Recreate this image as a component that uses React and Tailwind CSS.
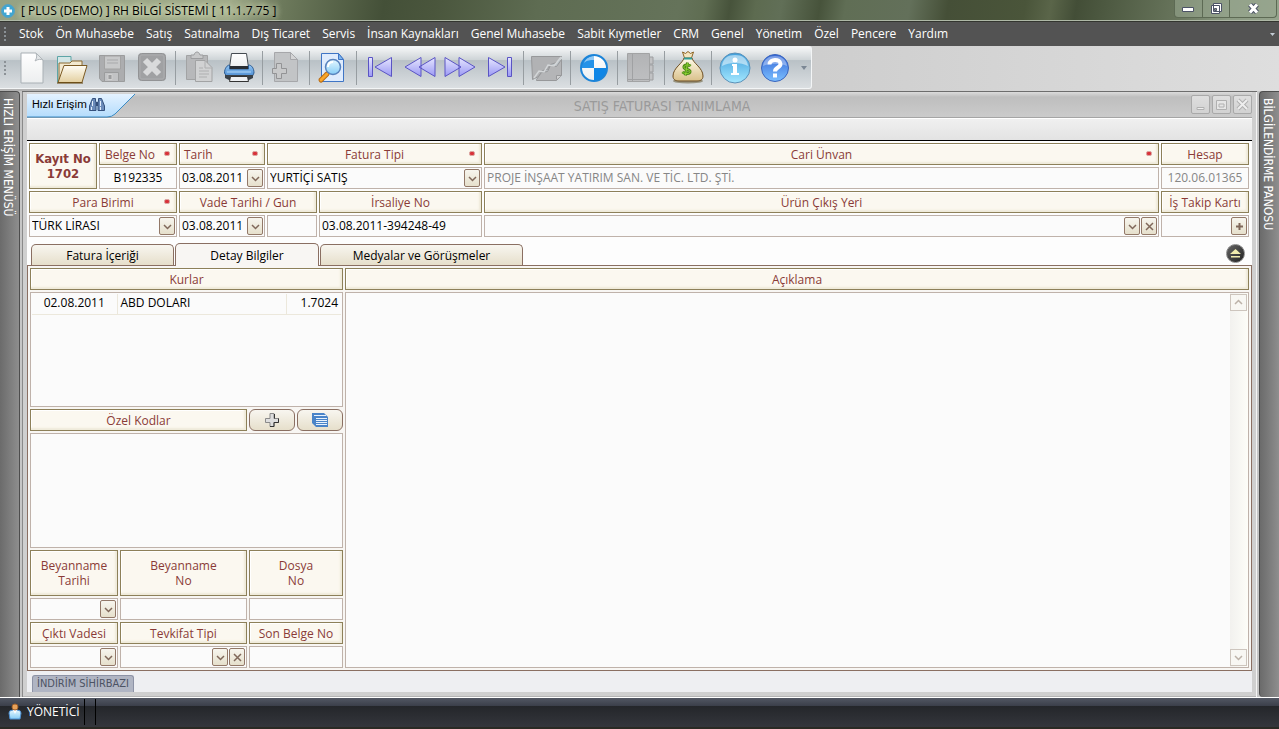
import { useState } from "react";

const MENU = [
  "Stok",
  "Ön Muhasebe",
  "Satış",
  "Satınalma",
  "Dış Ticaret",
  "Servis",
  "İnsan Kaynakları",
  "Genel Muhasebe",
  "Sabit Kıymetler",
  "CRM",
  "Genel",
  "Yönetim",
  "Özel",
  "Pencere",
  "Yardım",
];

const headClass =
  "relative flex items-center justify-center border border-[#8d8059] bg-[#fbf8f0] px-1 text-center leading-[15px] text-[#8a3b37] shadow-[inset_-2px_-2px_2px_#efeada,inset_1px_1px_0_#ffffff]";
const fieldClass =
  "flex h-[22px] min-w-0 items-center border border-[#bfb2aa] bg-[#fbfbfb]";
const inputClass =
  "h-full w-full min-w-0 flex-1 appearance-none bg-transparent px-[2px] pb-[1px] outline-none";
const tabClass =
  "rounded-t-[5px] border border-b-0 border-[#8a6f62] pt-[2px] text-black";

const svgProps = {
  width: 32,
  height: 34,
  viewBox: "0 0 32 34",
  fill: "none",
  "aria-hidden": true,
};

function NewIcon() {
  return (
    <svg {...svgProps}>
      <path d="M5 2h15l7 7v23H5z" fill="url(#paper)" stroke="#a9b0b5" />
      <path d="M20 2c1 3 1 5-1 8 3-2 6-2 8-1z" fill="#e2e5e7" stroke="#b0b6ba" />
    </svg>
  );
}

function OpenIcon() {
  return (
    <svg {...svgProps}>
      <path d="M1.500 31V5.500H15v5h10V31z" fill="#d3e6e6" stroke="#5da5a7" />
      <path d="M3 31V12h11l2-2h10v5" fill="#f2e9cf" stroke="#8c6c34" />
      <path d="M2 31.500 8 14.500h23L26 31.500z" fill="url(#folder)" stroke="#7c5a22" />
      <path d="M1 32h26" stroke="#5f430f" />
    </svg>
  );
}

function SaveIcon() {
  return (
    <svg {...svgProps}>
      <path d="M3.500 4.500h25v26H6l-2.500-3z" fill="#acadaf" stroke="#9b9c9d" />
      <path d="M8.500 5h16v13h-16z" fill="#c8c9ca" stroke="#a3a3a3" />
      <path d="M11 9h11M11 12h11" stroke="#a8a9ab" />
      <path d="M8.500 21.500h14v9h-14z" fill="#c2c3c5" stroke="#9b9c9d" />
      <path d="M12 23.500h4v5h-4z" fill="#9c9d9f" stroke="#d0d0d0" />
    </svg>
  );
}

function DeleteIcon() {
  return (
    <svg {...svgProps}>
      <rect x="2.500" y="2.500" width="27" height="27" rx="3" fill="#a0a1a3" stroke="#929395" />
      <rect x="4" y="4" width="24" height="24" rx="2" stroke="#adaeb0" />
      <path d="m9 9 14 14M23 9 9 23" stroke="#d9dadb" strokeWidth="6" />
    </svg>
  );
}

function PasteIcon() {
  return (
    <svg {...svgProps}>
      <path d="M3.500 4.500h21v24h-21z" fill="#b7b8ba" stroke="#a2a3a4" />
      <path d="M8 7.500V4h3c1-4 5-4 6 0h3v3.500z" fill="#c8c9ca" stroke="#9c9d9f" />
      <path d="M12.500 9.500H22l7 7v14H12.500z" fill="#d1d2d3" stroke="#a2a3a4" />
      <path d="M22 10v7h7M16 17h4M16 20h10M16 23h10M16 26h8" stroke="#aeafb0" />
    </svg>
  );
}

function PrintIcon() {
  return (
    <svg {...svgProps}>
      <path d="M8.500 2.500h15l2 14h-19z" fill="url(#paper)" stroke="#444a50" />
      <path d="M1.500 22c0-5 3-8 5-8v4h19v-4c3 0 5.500 3 5.500 8l-2 4H4z" fill="url(#blue)" stroke="#2d5c92" />
      <path d="M7 15h18v3H7z" fill="#282d33" />
      <path d="M2 24h28v3l-4 2H6l-4-2z" fill="#3a4148" />
      <path d="M7.500 25.500h17l1 5h-19z" fill="#eef0f2" stroke="#333" />
      <path d="M4 21h24" stroke="#b4d8f8" />
    </svg>
  );
}

function AddPageIcon() {
  return (
    <svg {...svgProps}>
      <path d="M4.500 1.500h16l7 7v22h-23z" fill="#c2c4c6" stroke="#a6a7aa" />
      <path d="M20.500 1.500v7h7z" fill="#d4d5d6" stroke="#a6a7aa" />
      <path d="M6.500 12.500h5v5h5v5h-5v5h-5v-5h-4v-5h4z" fill="#c8c9ca" stroke="#929395" />
    </svg>
  );
}

function SearchIcon() {
  return (
    <svg {...svgProps}>
      <path d="M4.500 2.500h17l5 6v22h-22z" fill="#dfecfd" stroke="#3f75c5" />
      <path d="M21.500 2.500v6h5z" fill="#7fb7ee" stroke="#3f75c5" />
      <path d="m4 29 6-6" stroke="#b96a10" strokeWidth="5" strokeLinecap="round" />
      <path d="m4 29 6-6" stroke="#f8a62c" strokeWidth="3" strokeLinecap="round" />
      <circle cx="16" cy="16" r="7.500" fill="url(#lens)" stroke="#5983bd" strokeWidth="1.500" />
      <path d="M11 16c0-3 2-5 5-5" stroke="#fff" strokeWidth="2" />
    </svg>
  );
}

const NAV_PATHS = {
  first: "M4.500 6.500h4v19h-4zM27.500 6.500v19L11 16z",
  prev: "M17 6.500v19L1 16zM31 6.500v19L15 16z",
  next: "M1 6.500v19L17 16zM15 6.500v19L31 16z",
  last: "M4.500 6.500v19L21 16zM23.500 6.500h4v19h-4z",
};

function NavIcon({ kind }) {
  return (
    <svg {...svgProps}>
      <path d={NAV_PATHS[kind]} fill="url(#nav)" stroke="#5a54c4" strokeLinejoin="round" />
    </svg>
  );
}

function ChartIcon() {
  return (
    <svg {...svgProps}>
      <path d="M.500 5.500h30l-5 6-6 2-3 5-5 1-4 6-6 3z" fill="#b1b2b4" stroke="#97989a" />
      <path d="m5.500 28.500 5-7 6-1 3-6 6 1 5-7v16l-5 5h-20z" fill="#b4b5b7" stroke="#97989a" />
      <path d="m3 27 5-7 5 1 4-7 6 1 7-9" stroke="#d3d6d8" strokeWidth="1.500" />
      <path d="M25.500 28.500v-4h5" fill="#d0d1d2" stroke="#97989a" />
    </svg>
  );
}

function RoundelIcon() {
  return (
    <svg {...svgProps}>
      <circle cx="16" cy="17" r="13.500" fill="url(#paper)" />
      <path d="M16 17V4A13 13 0 0 0 3 17z" fill="#2492e8" />
      <path d="M16 17v13a13 13 0 0 0 13-13z" fill="#0f86e6" />
      <path d="M6 12c2-5 6-7 10-7s8 2 10 7c-3-3-6-3-10-3s-7 0-10 3z" fill="#ffffff" opacity=".5" />
      <circle cx="16" cy="17" r="13" stroke="#1c84d8" strokeWidth="2" />
    </svg>
  );
}

function BookIcon() {
  return (
    <svg {...svgProps}>
      <path d="M23 6h5v7h-5zM23 14h5v7h-5zM23 22h5v7h-5z" fill="#c1c2c4" stroke="#9d9ea0" />
      <path d="M2.500 2.500h22v28h-22z" fill="url(#book)" stroke="#a2a3a4" />
      <path d="M7.500 3v27M3 28.500h21" stroke="#a0a1a3" />
    </svg>
  );
}

function MoneyIcon() {
  return (
    <svg {...svgProps}>
      <ellipse cx="16" cy="30" rx="15" ry="2.500" fill="#6f6543" opacity=".6" />
      <path d="M12 7h8c1 5 11 10 11 18 0 4-3 5-6 5H7c-3 0-6-1-6-5C1 17 11 12 12 7z" fill="url(#bag)" stroke="#6d4d20" />
      <path d="m10.500 1 3 1.500L16 .500l2.500 2 3-1.500-2 6h-7z" fill="#f5e5bf" stroke="#8c6426" />
      <path d="M12 7.500h8" stroke="#2f9c98" strokeWidth="2" />
      <path d="M18.500 15c-2-2-7-1-6.500 1.500s6 1.500 6 4-5 3-7.500.500M15.500 11.500l-2 13" stroke="#4c8a16" strokeWidth="3" />
      <path d="M18.500 15c-2-2-7-1-6.500 1.500s6 1.500 6 4-5 3-7.500.500M15.500 12l-2 12" stroke="#8ed332" />
    </svg>
  );
}

function InfoIcon() {
  return (
    <svg {...svgProps}>
      <circle cx="16" cy="17" r="15" fill="url(#aqua)" stroke="#5a90b8" />
      <path d="M3 15C4 7 9 4 16 4s12 3 13 11c-7-4-19-4-26 0z" fill="#fff" opacity=".5" />
      <circle cx="16" cy="9" r="2.500" fill="#fff" />
      <path d="M13 13h5v9h2v2h-8v-2h2v-7h-1z" fill="#fff" />
    </svg>
  );
}

function HelpIcon() {
  return (
    <svg {...svgProps}>
      <circle cx="16" cy="17" r="13.500" fill="url(#help)" stroke="#3a64bc" />
      <path d="M4 15C5 8 10 5 16 5s11 3 12 10c-6-3-18-3-24 0z" fill="#fff" opacity=".35" />
      <path d="M10.500 13.500c0-6 11-6 11-.500 0 4-5.500 3-5.500 7.500" stroke="#fff" strokeWidth="4" />
      <path d="M14 22.500h4v4h-4z" fill="#fff" />
    </svg>
  );
}

// null marks a separator
const TOOLS = [
  ["Yeni", <NewIcon />],
  ["Aç", <OpenIcon />],
  ["Kaydet", <SaveIcon />],
  ["Sil", <DeleteIcon />],
  null,
  ["Yapıştır", <PasteIcon />],
  ["Yazdır", <PrintIcon />],
  null,
  ["Ekle", <AddPageIcon />],
  null,
  ["Ara", <SearchIcon />],
  null,
  ["İlk", <NavIcon kind="first" />],
  ["Önceki", <NavIcon kind="prev" />],
  ["Sonraki", <NavIcon kind="next" />],
  ["Son", <NavIcon kind="last" />],
  null,
  ["Grafik", <ChartIcon />],
  null,
  ["Durum", <RoundelIcon />],
  null,
  ["Defter", <BookIcon />],
  null,
  ["Kasa", <MoneyIcon />],
  null,
  ["Bilgi", <InfoIcon />],
  ["Yardım", <HelpIcon />],
];

function Gradients() {
  const list = [
    ["paper", "#ffffff", "#eceeef"],
    ["folder", "#fffdf5", "#e3cf9f"],
    ["blue", "#8fc3f2", "#4b8bd0"],
    ["lens", "#e6f8ff", "#86cdf6"],
    ["nav", "#e6e6ff", "#9a98f4"],
    ["book", "#b2b3b5", "#bebfc1"],
    ["bag", "#fffbe8", "#d9c08a"],
    ["aqua", "#3f9fdc", "#a5e8ff"],
    ["help", "#3567d6", "#7cc0ff"],
  ];
  return (
    <svg className="absolute h-0 w-0" aria-hidden="true">
      <defs>
        {list.map(([id, from, to]) => (
          <linearGradient key={id} id={id} x1="0" y1="0" x2="0" y2="1">
            <stop offset="0" stopColor={from} />
            <stop offset="1" stopColor={to} />
          </linearGradient>
        ))}
      </defs>
    </svg>
  );
}

function Grip() {
  return (
    <span className="flex w-[3px] flex-col gap-[2px]">
      {[0, 1, 2, 3].map((n) => (
        <span key={n} className="h-[2px] w-[2px] bg-[#8b9196]" />
      ))}
    </span>
  );
}

function Head({ children, required, className = "", htmlFor }) {
  return (
    <label htmlFor={htmlFor} className={`${headClass} ${className}`}>
      <span className={required ? "flex-1 pr-4" : ""}>{children}</span>
      {required && (
        <span className="absolute top-[7px] right-[6px] h-[5px] w-[6px] rounded-[2px] border border-[#dba6a2] bg-[#d8323a]" />
      )}
    </label>
  );
}

const GLYPHS = {
  down: "M2 4l3.500 3.500L9 4",
  up: "M2 7l3.500-3.500L9 7",
  close: "M2 2l7 7M9 2l-7 7",
};

function Glyph({ name }) {
  return (
    <svg width="11" height="11" viewBox="0 0 11 11" fill="none" aria-hidden="true">
      {name === "plus" ? (
        <path d="M5.500 2v7M2 5.500h7" stroke="currentColor" strokeWidth="2" />
      ) : (
        <path d={GLYPHS[name]} stroke="currentColor" strokeWidth="1.500" />
      )}
    </svg>
  );
}

const smallClass =
  "mr-[1px] flex h-[18px] w-[16px] shrink-0 items-center justify-center rounded-[2px] border border-[#927868] bg-linear-to-b from-[#f7f5ee] to-[#e6e0cc] text-[#80685a]";

function SmallButton({ icon, label }) {
  return (
    <button type="button" aria-label={label} className={smallClass}>
      <Glyph name={icon} />
    </button>
  );
}

function Field({ id, label, value = "", className = "", inputClassName = "", children }) {
  return (
    <div className={`${fieldClass} ${className}`}>
      <input
        id={id}
        aria-label={label}
        defaultValue={value}
        className={`${inputClass} ${inputClassName}`}
      />
      {children}
    </div>
  );
}

function SelectField({ id, value = "", className = "", children }) {
  return (
    <div className={`${fieldClass} ${className}`}>
      <div className="relative flex h-full min-w-0 flex-1 items-center">
        <select id={id} defaultValue={value} className={inputClass}>
          <option>{value}</option>
        </select>
        <span className={`${smallClass} pointer-events-none absolute right-0`}>
          <Glyph name="down" />
        </span>
      </div>
      {children}
    </div>
  );
}

function InvoiceHeader() {
  return (
    <div className="grid grid-cols-[68px_78px_86px_50px_163px_1fr_88px] auto-rows-[22px] gap-[2px] pt-[2px] pr-[3px] pl-[2px]">
      <div
        className={`${headClass} row-span-2 font-['DejaVu_Sans_Condensed','DejaVu_Sans',sans-serif] text-[13px] leading-[14px] font-bold`}
      >
        <span>
          Kayıt No
          <br />
          1702
        </span>
      </div>
      <Head htmlFor="belge" required>Belge No</Head>
      <Head htmlFor="tarih" required>
        <span className="block text-left">Tarih</span>
      </Head>
      <Head htmlFor="tip" required className="col-span-2 pl-5">Fatura Tipi</Head>
      <Head htmlFor="cari" required className="pl-5">Cari Ünvan</Head>
      <Head htmlFor="hesap">Hesap</Head>

      <Field id="belge" value="B192335" inputClassName="text-center" />
      <Field id="tarih" value="03.08.2011">
        <SmallButton icon="down" label="Tarih seç" />
      </Field>
      <SelectField id="tip" value="YURTİÇİ SATIŞ" className="col-span-2" />
      <Field
        id="cari"
        value="PROJE İNŞAAT YATIRIM SAN. VE TİC. LTD. ŞTİ."
        inputClassName="text-[#868686]"
      />
      <Field id="hesap" value="120.06.01365" inputClassName="text-center text-[#868686]" />

      <Head htmlFor="para" required className="col-span-2 pl-5">Para Birimi</Head>
      <Head htmlFor="vade" className="col-span-2">Vade Tarihi / Gun</Head>
      <Head htmlFor="irsaliye">İrsaliye No</Head>
      <Head htmlFor="cikis">Ürün Çıkış Yeri</Head>
      <Head htmlFor="takip">İş Takip Kartı</Head>

      <SelectField id="para" value="TÜRK LİRASI" className="col-span-2" />
      <Field id="vade" value="03.08.2011">
        <SmallButton icon="down" label="Vade seç" />
      </Field>
      <Field id="gun" label="Gun" />
      <Field id="irsaliye" value="03.08.2011-394248-49" />
      <SelectField id="cikis">
        <SmallButton icon="close" label="Temizle" />
      </SelectField>
      <Field id="takip">
        <SmallButton icon="plus" label="Ekle" />
      </Field>
    </div>
  );
}

function Rates() {
  return (
    <div className="h-[115px] border border-[#bfb2aa] bg-[#fbfbfb] p-[1px]">
      <table className="w-full table-fixed border-collapse leading-[14px]">
        <tbody>
          <tr className="h-[20px] border-b border-[#ece8dc]">
            <td className="w-[85px] border-r border-[#ece8dc] pb-[2px] text-center">02.08.2011</td>
            <td className="border-r border-[#ece8dc] pb-[2px] pl-[3px]">ABD DOLARI</td>
            <td className="w-[55px] pr-[3px] pb-[2px] text-right">1.7024</td>
          </tr>
        </tbody>
      </table>
    </div>
  );
}

const codeButton =
  "flex items-center justify-center rounded-[6px] border border-[#8a6f62] bg-linear-to-b from-[#f8f6f0] to-[#e6dfcb]";

const scrollButton =
  "flex h-[17px] items-center justify-center border border-[#cdc5bd] bg-[#f8f7f3]";

function DetailPanel() {
  return (
    <div className="flex flex-1 gap-[2px] border border-[#8a6f62] bg-[#f8f6f3] p-[2px]">
      <div className="flex w-[313px] flex-col gap-[2px]">
        <div className={`${headClass} h-[22px]`}>Kurlar</div>
        <Rates />
        <div className="grid h-[22px] grid-cols-[217px_46px_46px] gap-[2px]">
          <div className={headClass}>Özel Kodlar</div>
          <button type="button" aria-label="Kod ekle" className={codeButton}>
            <svg width="16" height="16" viewBox="0 0 16 16" aria-hidden="true">
              <path d="M6 1.500h4v5h4.500v4H10v4H6v-4H1.500v-4H6z" fill="#dedede" stroke="#8a8a8a" />
              <path d="M10.500 2v4.500M14.500 6.500v4H10v4H6" fill="none" stroke="#333" />
            </svg>
          </button>
          <button type="button" aria-label="Kod listesi" className={codeButton}>
            <svg width="18" height="16" viewBox="0 0 18 16" aria-hidden="true">
              <path d="M1 1h12l4 4v10H5l-4-4z" fill="#4a84c8" />
              <path d="M3 3.500h12M5 6.500h11M5 8.500h11M5 10.500h11M5 12.500h11" stroke="#e8f2fc" />
            </svg>
          </button>
        </div>
        <div className="min-h-0 flex-1 border border-[#bfb2aa] bg-[#fbfbfb]" />
        <div className="grid grid-cols-[88px_127px_94px] grid-rows-[46px_22px_22px_22px] gap-[2px]">
          <Head htmlFor="btarih">Beyanname Tarihi</Head>
          <Head htmlFor="bno">Beyanname<br />No</Head>
          <Head htmlFor="dosya">Dosya<br />No</Head>
          <Field id="btarih">
            <SmallButton icon="down" label="Beyanname tarihi seç" />
          </Field>
          <Field id="bno" />
          <Field id="dosya" />
          <Head htmlFor="cikti">Çıktı Vadesi</Head>
          <Head htmlFor="tevkifat">Tevkifat Tipi</Head>
          <Head htmlFor="sonbelge">Son Belge No</Head>
          <Field id="cikti">
            <SmallButton icon="down" label="Çıktı vadesi seç" />
          </Field>
          <SelectField id="tevkifat">
            <SmallButton icon="close" label="Temizle" />
          </SelectField>
          <Field id="sonbelge" />
        </div>
      </div>

      <div className="flex min-w-0 flex-1 flex-col gap-[2px]">
        <Head htmlFor="aciklama" className="h-[22px]">Açıklama</Head>
        <div className="flex flex-1 border border-[#bfb2aa] bg-[#fbfbfb]">
          <textarea
            id="aciklama"
            className="min-w-0 flex-1 resize-none bg-transparent p-1 outline-none"
          />
          <div className="flex w-[18px] flex-col justify-between bg-linear-to-r from-[#f2f1ee] to-[#fdfdf8] py-[1px] pr-[1px] text-[#bcb2a8]">
            <button type="button" aria-label="Yukarı" className={scrollButton}>
              <Glyph name="up" />
            </button>
            <button type="button" aria-label="Aşağı" className={scrollButton}>
              <Glyph name="down" />
            </button>
          </div>
        </div>
      </div>
    </div>
  );
}

function Binoculars() {
  return (
    <svg width="16" height="15" viewBox="0 0 16 15" aria-hidden="true">
      <path d="M3.500 1.500h3v3H7v9H.500V9zM9.500 1.500h3l3 7.500v4.500H9v-9h.500z" fill="#6c8cba" stroke="#34507c" />
      <path d="M7 5h2v4H7z" fill="#34507c" />
      <path d="M3.500 4v5M11.500 4v5M2.500 10v3M11.500 10v3" stroke="#e3eefb" />
    </svg>
  );
}

const childButton =
  "flex h-[19px] w-[19px] items-center justify-center rounded-[2px] border border-[#a9a9a9] bg-linear-to-b from-[#dedede] to-[#d2d2d2] text-[#b0b0b0]";

function FormWindow() {
  const [tab, setTab] = useState(1);
  const tabs = [
    ["Fatura İçeriği", "w-[143px]"],
    ["Detay Bilgiler", "w-[144px]"],
    ["Medyalar ve Görüşmeler", "w-[203px]"],
  ];

  return (
    <section className="flex min-w-0 flex-1 flex-col border-t border-[#6d6d6d] bg-[#cfcfcf] px-[5px] pb-[5px] shadow-[inset_1px_0_0_#8a8a8a,inset_-1px_0_0_#f4f4f4,inset_0_-1px_0_#b4b4b4]">
      <header className="flex h-[26px] items-center border-b border-[#a5a5a5] bg-linear-to-b from-[#dcdcdc] via-[#bebebe] via-20% to-[#cbcbcb]">
        <div className="relative h-[24px] w-[110px]">
          <svg width="110" height="25" viewBox="0 0 110 25" className="absolute top-0 left-0" aria-hidden="true">
            <defs>
              <linearGradient id="quick" x1="0" y1="0" x2="0" y2="1">
                <stop offset="0" stopColor="#e4f2ff" />
                <stop offset="1" stopColor="#b4dcfc" />
              </linearGradient>
            </defs>
            <path d="M0 1h108L88 21q-3 3-8 3H0z" fill="url(#quick)" />
            <path d="M108 1 88 21q-3 3-8 3H0" fill="none" stroke="#3a8cc6" />
          </svg>
          <button
            type="button"
            className="relative flex h-full items-center gap-[2px] pl-[5px] font-['Roboto','Open_Sans',sans-serif] text-[11px] text-black"
          >
            Hızlı Erişim
            <Binoculars />
          </button>
        </div>
        <h1 className="flex-1 pt-[2px] pr-1 text-center font-['DejaVu_Sans_Condensed','DejaVu_Sans',sans-serif] text-[14px] text-[#9a9a9a]">
          SATIŞ FATURASI TANIMLAMA
        </h1>
        <div className="flex gap-[2px]">
          <button type="button" aria-label="Küçült" className={childButton}>
            <svg width="13" height="13" viewBox="0 0 13 13">
              <path d="M3 9.500h7v2H3z" fill="#eee" stroke="currentColor" />
            </svg>
          </button>
          <button type="button" aria-label="Büyüt" className={childButton}>
            <svg width="13" height="13" viewBox="0 0 13 13">
              <path d="M1.500 2.500h10v9h-10zM4 6h5v3H4z" fill="#e6e6e6" stroke="currentColor" />
            </svg>
          </button>
          <button type="button" aria-label="Kapat" className={childButton}>
            <svg width="13" height="13" viewBox="0 0 13 13">
              <path d="m2 2 9 9M11 2l-9 9" stroke="currentColor" strokeWidth="4" />
              <path d="m2 2 9 9M11 2l-9 9" stroke="#eee" strokeWidth="2" />
            </svg>
          </button>
        </div>
      </header>

      <div className="h-[22px] border-t border-white bg-linear-to-b from-[#f0f0f0] to-[#e3e3e3]" />

      <div className="flex flex-1 flex-col border-t border-black bg-[#fdfdfd]">
        <InvoiceHeader />

        <div className="mt-[6px] flex h-[22px] items-end justify-between">
          <div role="tablist" className="relative z-10 flex items-end gap-[1px] pl-[4px]">
            {tabs.map(([name, width], i) => (
              <button
                key={name}
                type="button"
                role="tab"
                aria-selected={tab === i}
                onClick={() => setTab(i)}
                className={`${tabClass} ${width} ${
                  tab === i
                    ? "-mb-[1px] h-[23px] bg-[#f8f6f3]"
                    : "h-[21px] bg-linear-to-b from-[#f8f6f0] to-[#e6dfcb]"
                }`}
              >
                {name}
              </button>
            ))}
          </div>
          <button
            type="button"
            aria-label="Gizle"
            className="mr-[7px] mb-[2px] flex h-[19px] w-[19px] items-center justify-center rounded-full border border-[#888] bg-linear-to-br from-[#666] via-[#444] to-[#222]"
          >
            <svg width="11" height="10" viewBox="0 0 11 10" aria-hidden="true">
              <path d="M5.500 0 11 5H0zM1 7h9v1.500H1z" fill="#f1ecae" />
            </svg>
          </button>
        </div>

        <DetailPanel />
      </div>

      <div className="flex h-[21px] items-end bg-[#eeeff2] pl-[5px]">
        <button
          type="button"
          className="h-[17px] rounded-t-[3px] border border-b-0 border-[#8d93a6] bg-[#b0b5c3] px-[4px] font-['DejaVu_Sans_Condensed',sans-serif] text-[11px] leading-[16px] text-[#4d5363]"
        >
          İNDİRİM SİHİRBAZI
        </button>
      </div>
    </section>
  );
}

function SidePanel({ children, className = "" }) {
  return (
    <aside
      className={`w-[20px] shrink-0 border-t border-[#4d4d4d] bg-linear-to-r from-[#6b6b6b] to-[#8e8e8e] font-['DejaVu_Sans_Condensed',sans-serif] text-[12px] text-white ${className}`}
    >
      <button type="button" className="w-[16px] pt-[6px] leading-[16px] [writing-mode:vertical-rl]">
        {children}
      </button>
    </aside>
  );
}

const captionButton = "flex h-[17px] items-center justify-center border-r border-[#5d6a54]";

export default function App() {
  return (
    <div className="flex min-h-screen flex-col bg-[#c4c4c4] font-['Open_Sans','Noto_Sans',sans-serif] text-[12px] leading-[16px] text-black">
      <Gradients />
      <div className="flex h-[22px] items-center justify-between border-b border-[#33352f] bg-[linear-gradient(100deg,#96a283_0%,#a0ab89_18%,#6d7a5c_22%,#445038_30%,#4a563d_34%,#5e6c52_42%,#65735a_53%,#5f6d52_55%,#47533b_57%,#5d6b50_59%,#616f57_61%,#47533b_64%,#606e55_66%,#63705a_71%,#454f37_74%,#4a553a_80%,#5a6549_82%,#434e37_84%,#4c5840_86%,#68755c_92%,#8c9b83_96%,#95a38c_100%)] shadow-[inset_0_-1px_0_#aeb8a6]">
        <div className="flex items-center gap-[6px] pl-[1px]">
          <svg width="14" height="14" viewBox="0 0 14 14" aria-hidden="true">
            <circle cx="7" cy="7" r="6.500" fill="#3fa6d2" stroke="#5aa0c0" />
            <path d="M7 3v8M3 7h8" stroke="#fff" strokeWidth="3" />
          </svg>
          <span className="[text-shadow:0_0_6px_#eef5d0,0_0_6px_#eef5d0]">
            [ PLUS (DEMO) ] RH BİLGİ SİSTEMİ [ 11.1.7.75 ]
          </span>
        </div>
        <div className="mr-[2px] mb-[4px] flex self-start rounded-b-[4px] border border-t-0 border-[#5d6a54] bg-[#98a68f]/60">
          <button type="button" aria-label="Simge durumu" className={`${captionButton} w-[28px]`}>
            <svg width="13" height="7" viewBox="0 0 13 7">
              <path d="M.500 2.500h11v4H.500z" fill="#fff" stroke="#4c5366" />
            </svg>
          </button>
          <button type="button" aria-label="Geri yükle" className={`${captionButton} w-[27px]`}>
            <svg width="13" height="13" viewBox="0 0 13 13">
              <path d="M3.500 1.500h8v8h-8zM1.500 3.500h8v8h-8z" fill="#fff" stroke="#4c5366" />
              <path d="M4.500 6.500h2v2h-2z" fill="#8c9b83" stroke="#4c5366" />
            </svg>
          </button>
          <button type="button" aria-label="Kapat" className="flex h-[17px] w-[46px] items-center justify-center">
            <svg width="13" height="11" viewBox="0 0 13 11">
              <path d="m3 1.500 7 8M10 1.500l-7 8" stroke="#4c5366" strokeWidth="5" />
              <path d="m3 1.500 7 8M10 1.500l-7 8" stroke="#fff" strokeWidth="3" />
            </svg>
          </button>
        </div>
      </div>

      <nav className="flex h-[24px] items-center bg-[#535353] px-[4px] text-white">
        <Grip />
        <ul className="flex flex-1 gap-3 pl-3 whitespace-nowrap">
          {MENU.map((item) => (
            <li key={item}>
              <button type="button">{item}</button>
            </li>
          ))}
        </ul>
        <svg width="5" height="3" viewBox="0 0 5 3" aria-hidden="true">
          <path d="M0 0h5L2.500 3z" fill="#c3ccd4" />
        </svg>
      </nav>

      <div className="flex h-[45px] items-start bg-linear-to-r from-[#b2b2b2] to-[#dedede]">
        <div
          role="toolbar"
          className="flex h-[43px] items-center rounded-r-[3px] border-y border-r border-[#f3f5f6] bg-[linear-gradient(#f6f7f8,#cdd3d6_32%,#b9c1c6_33%,#dbdfe2)] pr-[4px] pl-[4px]"
        >
          <Grip />
          <div className="flex items-center pl-[5px]">
            {TOOLS.map((tool, i) =>
              tool ? (
                <button key={tool[0]} type="button" aria-label={tool[0]} className="flex w-[40px] justify-center">
                  {tool[1]}
                </button>
              ) : (
                <span key={i} className="mx-[3px] h-[34px] w-[1px] bg-[#979da1]" />
              )
            )}
          </div>
          <svg width="12" height="4" viewBox="0 0 12 4" aria-hidden="true">
            <path d="M6 0h6L9 4z" fill="#7b8794" />
          </svg>
        </div>
      </div>

      <main className="flex flex-1 gap-[2px] bg-[#c6c6c6]">
        <SidePanel className="rounded-tr-[4px] border-r">HIZLI ERİŞİM MENÜSÜ</SidePanel>
        <FormWindow />
        <SidePanel className="rounded-l-[4px] border-l">BİLGİLENDİRME PANOSU</SidePanel>
      </main>

      <footer className="flex h-[32px] items-center border-t border-b-2 border-t-white border-b-[#2a2a24] bg-[linear-gradient(#525763,#3c404b_26%,#24262a_27%,#34363c)] pb-[2px] pl-[8px] text-white">
        <svg width="14" height="17" viewBox="0 0 14 17" aria-hidden="true">
          <path d="M2 16 1 10q0-3 4-3h4q4 0 4 3l-1 6z" fill="url(#lens)" stroke="#4d8fd0" />
          <path d="m5 7 2 4 2-4z" fill="#fff" />
          <circle cx="7" cy="4" r="3" fill="#e8a25a" stroke="#a3622a" />
        </svg>
        <span className="pr-[4px] pl-[5px]">YÖNETİCİ</span>
        <span className="h-[26px] w-[12px] border-x border-black" />
      </footer>
    </div>
  );
}
